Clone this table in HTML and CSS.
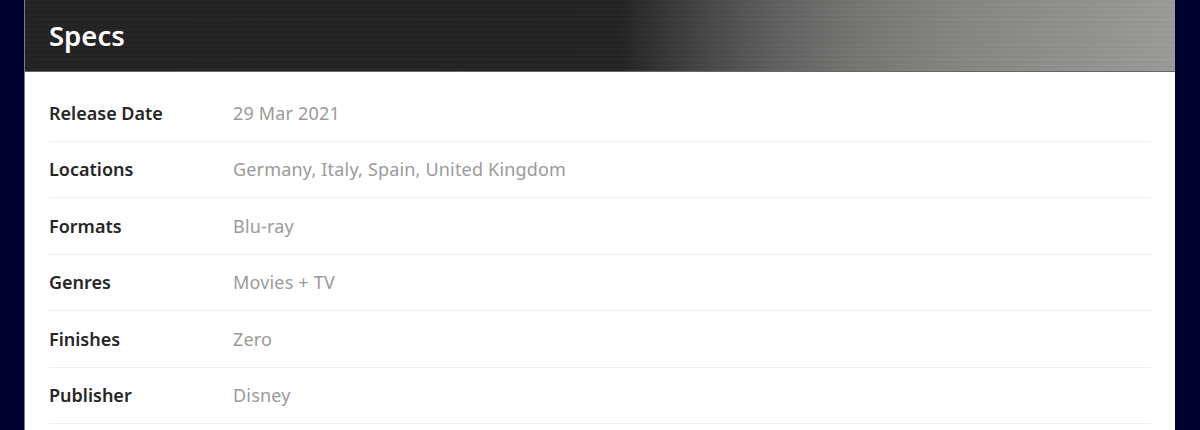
FILE: index.html
```html
<!DOCTYPE html>
<html lang="en">
<head>
<meta charset="utf-8">
<title>Specs</title>
<link rel="stylesheet" href="styles.css">
</head>
<body>
<div class="page">
  <section class="panel">
    <header class="panel-head">
      <h2 class="panel-title">Specs</h2>
    </header>
    <dl class="specs">
      <div class="spec-row"><dt class="spec-label">Release Date</dt><dd class="spec-value">29 Mar 2021</dd></div>
      <div class="spec-row"><dt class="spec-label">Locations</dt><dd class="spec-value">Germany, Italy, Spain, United Kingdom</dd></div>
      <div class="spec-row"><dt class="spec-label">Formats</dt><dd class="spec-value">Blu-ray</dd></div>
      <div class="spec-row"><dt class="spec-label">Genres</dt><dd class="spec-value">Movies + TV</dd></div>
      <div class="spec-row"><dt class="spec-label">Finishes</dt><dd class="spec-value">Zero</dd></div>
      <div class="spec-row"><dt class="spec-label">Publisher</dt><dd class="spec-value">Disney</dd></div>
    </dl>
  </section>
</div>
</body>
</html>
```

FILE: styles.css
```css
html, body {
  margin: 0;
  padding: 0;
  background: #03022e;
  height: 430px;
  overflow: hidden;
  font-family: "Noto Sans", "Open Sans", sans-serif;
}
.page {
  padding: 0 25px;
}
.panel {
  background: #fff;
  border-left: 1px solid #7a7a9a;
  margin-left: -1px;
  min-height: 430px;
}
.panel-head {
  height: 71px;
  border-bottom: 1px solid #666;
  display: flex;
  align-items: center;
  padding: 0 24px;
  background:
    repeating-linear-gradient(180deg, rgba(255,255,255,0.018) 0 1px, rgba(0,0,0,0.018) 1px 3px, rgba(255,255,255,0.01) 3px 5px),
    linear-gradient(90deg, #222 0, #232323 51.7%, #333 55%, #444 58.7%, #5a5a5a 63.9%, #6a6a69 68.5%, #757572 72.6%, #858582 81.3%, #8f8f8d 90%, #9a9a98 100%);
}
.panel-title {
  margin: 0;
  color: #fff;
  font-size: 27.5px;
  font-weight: 600;
  line-height: 1;
}
.specs {
  margin: 0;
  padding: 13px 24px 0;
}
.spec-row {
  display: flex;
  align-items: center;
  height: 55.5px;
  border-bottom: 1px solid #efefef;
}
.spec-label {
  width: 184px;
  flex: none;
  color: #262626;
  font-size: 18px;
  font-weight: 600;
}
.spec-value {
  margin: 0;
  color: #9a9a9a;
  font-size: 18px;
  letter-spacing: 0.18px;
}
```
